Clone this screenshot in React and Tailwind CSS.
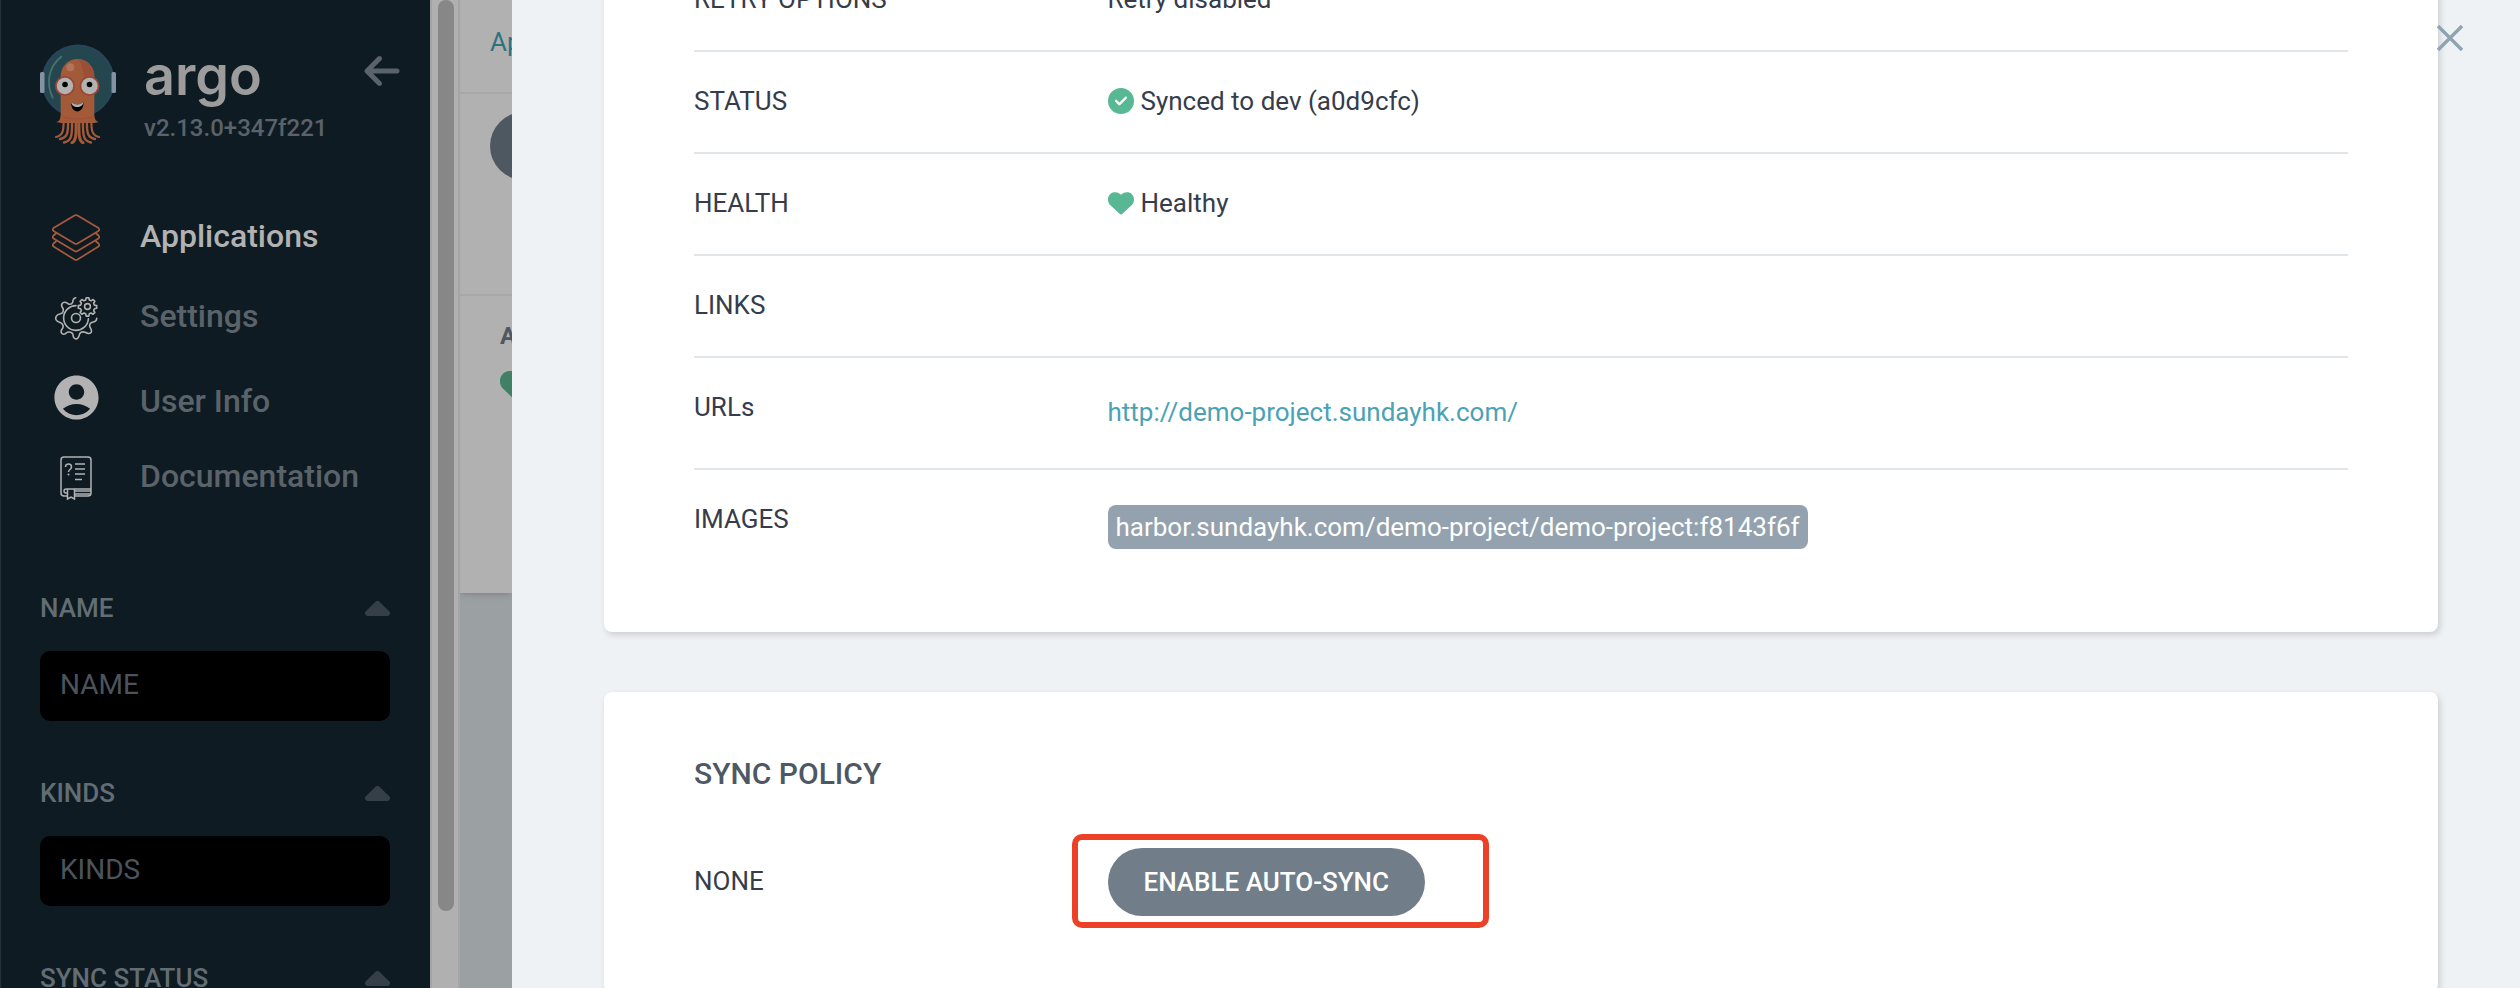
import React, { useState } from "react";
import { FaArrowLeft, FaCircleCheck, FaHeart } from "react-icons/fa6";
import { MdAccountCircle } from "react-icons/md";

const navItems = [
  { title: "Applications", Icon: LayersIcon, row: "h-20", active: true },
  { title: "Settings", Icon: GearsIcon, row: "h-20" },
  { title: "User Info", Icon: UserIcon, row: "h-[90px]" },
  { title: "Documentation", Icon: DocsIcon, row: "h-[60px]" },
];

const filters = ["NAME", "KINDS", "SYNC STATUS"];

export default function App() {
  return (
    <div className="flex h-screen overflow-hidden bg-[#eef2f5] font-['Roboto',sans-serif] text-[26px] leading-[48px] text-[#363c4a]">
      <Sidebar />
      <BackgroundPage />
      <DetailsPanel />
    </div>
  );
}

const Sidebar = () => {
  return (
    <aside className="flex shrink-0">
      <div className="w-[430px] overflow-hidden border-l border-[#24313a] bg-[#0f1b22] pr-10 pl-[39px]">
        <div className="flex h-[198px] pt-11">
          <ArgoLogo />
          <div className="ml-7 flex flex-col">
            <span className="font-['Inter',sans-serif] text-[54px] leading-[64px] font-semibold text-[#9b9c9b]">
              argo
            </span>
            <span className="text-[24px] leading-10 font-medium text-[#5b636a]">
              v2.13.0+347f221
            </span>
          </div>
          <button
            type="button"
            aria-label="Collapse sidebar"
            className="-mr-3 ml-auto h-10 pt-[7px] text-[#5b636a]"
          >
            <FaArrowLeft size={40} />
          </button>
        </div>

        <nav>
          {navItems.map((item) => (
            <NavItem key={item.title} item={item} />
          ))}
        </nav>

        {/* Resource filters */}
        <div className="mt-[76px] flex flex-col gap-12">
          {filters.map((name) => (
            <Filter key={name} name={name} />
          ))}
        </div>
      </div>

      {/* Scrollbar */}
      <div className="w-[30px] border-x-2 border-[#a5a5a5] bg-[#b0b0b0] pl-[6px]">
        <div className="h-[92.2%] w-4 rounded-full bg-[#878787]" />
      </div>
    </aside>
  );
};

const NavItem = ({ item }) => {
  const { title, Icon, row, active } = item;
  return (
    <a href="#" className={`flex items-center ${row}`}>
      <span className="ml-3 flex w-12 justify-center">
        <Icon />
      </span>
      <span
        className={`ml-10 pb-1 text-[32px] font-medium ${
          active ? "text-[#b2b2b2]" : "text-[#5b636a]"
        }`}
      >
        {title}
      </span>
    </a>
  );
};

const Filter = ({ name }) => {
  const [value, setValue] = useState("");
  const id = `filter-${name.toLowerCase().replace(" ", "-")}`;
  return (
    <div>
      <div className="flex items-center justify-between">
        <label htmlFor={id} className="font-medium text-[#626d74]">
          {name}
        </label>
        <button type="button" aria-label={`Collapse ${name}`}>
          <svg width="25" height="15" viewBox="0 0 25 15" fill="#353f47">
            <path d="M10.6.8a2.7 2.7 0 0 1 3.8 0l9.8 9.5c1.7 1.7.7 4.7-1.9 4.7H2.7C.1 15-.9 12 .8 10.3z" />
          </svg>
        </button>
      </div>
      <input
        id={id}
        type="text"
        placeholder={name}
        value={value}
        onChange={(e) => setValue(e.target.value)}
        className="mt-[19px] block h-[70px] w-full rounded-[10px] bg-black px-5 pb-1 text-[28px] text-[#b2b2b2] placeholder:text-[#4b545d]"
      />
    </div>
  );
};

// Application page left visible behind the details panel
const BackgroundPage = () => {
  return (
    <main className="w-[52px] shrink-0 overflow-hidden bg-[#9ba0a3]">
      <div className="h-[593px] bg-[#b1b1b1] shadow-md">
        <div className="h-[94px] border-b-2 border-[#a7a8a9] pt-[18px] pl-[30px] whitespace-nowrap text-[#2f727e]">
          <a href="#">Applications</a>
        </div>
        <div className="h-[202px] border-b-2 border-[#a7a8a9] pt-[18px] pl-[30px]">
          <button
            type="button"
            aria-label="Details"
            className="block h-[68px] w-[200px] rounded-full bg-[#4e5860]"
          />
        </div>
        <div className="pt-4 pl-10 whitespace-nowrap">
          <p className="text-[24px] font-bold text-[#4e5860]">APP HEALTH</p>
          <FaHeart size={36} className="mt-2 text-[#3f8066]" />
        </div>
      </div>
    </main>
  );
};

const DetailsPanel = () => {
  return (
    <section className="relative min-w-0 flex-1 pr-[82px] pl-[92px]">
      <div className="-mt-[90px] flex flex-col gap-[60px]">
        <div className="rounded-lg bg-white px-[90px] pt-10 pb-14 shadow-[2px_3px_6px_rgba(0,0,0,0.15)]">
          <Row label="RETRY OPTIONS">Retry disabled</Row>
          <Row label="STATUS">
            <FaCircleCheck size={26} className="mr-[7px] text-[#58b893]" />
            Synced to dev (a0d9cfc)
          </Row>
          <Row label="HEALTH">
            <FaHeart size={26} className="mr-[7px] text-[#58b893]" />
            Healthy
          </Row>
          <Row label="LINKS" />
          <Row label="URLs">
            <a href="#" className="py-[5px] text-[#4aa2b4]">
              http://demo-project.sundayhk.com/
            </a>
          </Row>
          <Row label="IMAGES" last>
            <span className="mt-[10px] rounded-lg bg-[#93a2ae] px-2 leading-[44px] text-white">
              harbor.sundayhk.com/demo-project/demo-project:f8143f6f
            </span>
          </Row>
        </div>

        <div className="rounded-lg bg-white px-[90px] pt-[58px] pb-16 shadow-[2px_3px_6px_rgba(0,0,0,0.15)]">
          <h2 className="text-[30px] font-medium text-[#4e5864]">
            SYNC POLICY
          </h2>
          <div className="mt-9 flex">
            <div className="w-1/4 pt-[23px]">NONE</div>
            {/* Callout frame around the action */}
            <div className="-ml-9 rounded-[10px] border-[6px] border-[#ec4126] pt-2 pr-[58px] pb-[6px] pl-[30px]">
              <button
                type="button"
                className="block h-[68px] rounded-full bg-[#717d88] px-9 font-medium text-white"
              >
                ENABLE AUTO-SYNC
              </button>
            </div>
          </div>
        </div>
      </div>

      <button
        type="button"
        aria-label="Close"
        className="absolute top-[25px] right-[57px]"
      >
        <svg
          width="26"
          height="26"
          viewBox="0 0 26 26"
          stroke="#8fa4b1"
          strokeWidth="3.4"
        >
          <path d="M1 1l24 24M25 1L1 25" />
        </svg>
      </button>
    </section>
  );
};

const Row = ({ label, children, last }) => {
  return (
    <div
      className={`flex pt-[25px] pb-[27px] ${
        last ? "" : "border-b-2 border-[#dfe5e9]"
      }`}
    >
      <div className="w-1/4">{label}</div>
      <div className="flex items-center">{children}</div>
    </div>
  );
};

function ArgoLogo() {
  return (
    <svg width="76" height="100" viewBox="0 0 76 100" aria-label="Argo">
      <circle cx="38" cy="37" r="36.5" fill="#28465a" />
      <circle cx="38" cy="37" r="34.5" fill="#24474f" />
      <rect y="28" width="4.5" height="21" rx="1.5" fill="#8393a3" />
      <rect x="71.5" y="28" width="4.5" height="21" rx="1.5" fill="#8393a3" />
      <path
        d="M21.3 12.7C8 23 6 40 12.7 53.7"
        fill="none"
        stroke="#4a706f"
        strokeWidth="1.8"
        strokeLinecap="round"
      />
      <path
        d="M20.7 32a16.8 17 0 0 1 33.6 0v38c0 5 2 8 5 8l-5 1H21l-5-1c3 0 4.7-3 4.7-8z"
        fill="#a35a39"
      />
      <path
        d="M38 15a16.8 17 0 0 1 16.3 17v12H43c2-12 0-23-5-29z"
        fill="#9c4f37"
      />
      <g fill="none" stroke="#a35a39" strokeLinecap="round">
        <path d="M23.500 76c.5 11-1 15.500-7.500 17" strokeWidth="2.200" />
        <path d="M28 76c.5 14-1 17.500-8 19" strokeWidth="2.400" />
        <path d="M32 76c.5 17-1 21-8 22.500" strokeWidth="2.400" />
        <path d="M36 76c.5 17-.5 21-4 22.800" strokeWidth="3" />
        <path d="M51.500 76c-.5 11 1 15.500 7.500 17" strokeWidth="2.200" />
        <path d="M47 76c-.5 14 1 17.500 8 19" strokeWidth="2.400" />
        <path d="M43 76c-.5 17 1 21 8 22.500" strokeWidth="2.400" />
        <path d="M39 76c-.5 17 .5 21 4 22.800" strokeWidth="3" />
      </g>
      <path d="M23 73q15 4 29 0" fill="none" stroke="#9c4f37" />
      <circle cx="30.3" cy="23.3" r="4" fill="#b0755c" />
      <circle cx="25" cy="42" r="10" fill="#9c4734" />
      <circle cx="49.5" cy="42" r="10" fill="#9c4734" />
      <circle cx="25" cy="42" r="8.2" fill="#b2b2b2" />
      <circle cx="49.5" cy="42" r="8.2" fill="#b2b2b2" />
      <circle cx="25" cy="40.5" r="2.8" />
      <circle cx="49.5" cy="40.5" r="2.8" />
      <path d="M31 58q6.3 5 12.6 0c0 6-3 9.5-6.3 9.5S31 64 31 58z" />
      <path
        d="M31 58q6.3 5 12.6 0c-.5 3-3 5-6.3 5s-5.8-2-6.3-5z"
        fill="#b2b2b2"
      />
    </svg>
  );
}

function LayersIcon() {
  return (
    <svg
      width="48"
      height="48"
      viewBox="0 0 48 48"
      fill="none"
      stroke="#a85a3c"
      strokeWidth="1.7"
      strokeLinejoin="round"
    >
      <path d="M22.5 1.5q1.5-.8 3 0l21 12.5q1.5 1.5 0 3l-21 12.5q-1.5.8-3 0L1.5 17q-1.5-1.5 0-3z" />
      <path d="M4.5 19l-3 2.5q-1.5 1.5 0 3l21 12.5q1.5.8 3 0l21-12.5q1.5-1.5 0-3l-3-2.5" />
      <path d="M4.5 27l-3 2.5q-1.5 1.5 0 3l21 13q1.5.8 3 0l21-13q1.5-1.5 0-3l-3-2.5" />
    </svg>
  );
}

function GearsIcon() {
  return (
    <svg
      width="44"
      height="44"
      viewBox="0 0 44 44"
      fill="none"
      stroke="#b2b2b2"
      strokeWidth="1.6"
      strokeLinecap="round"
      strokeLinejoin="round"
    >
      <g transform="translate(1.2 1.2)">
        <circle cx="20.8" cy="20.8" r="4.5" />
        <path d="M20.8 8.4A12.4 12.4 0 1 0 33.2 21.5" />
        <path d="M20.5 0.5 Q17.8 1 17.5 5 Q16.5 7.5 13.5 7 Q9 3.5 6.8 6.5 Q5.5 8.5 8 11.5 Q8.5 16 5.5 16.5 Q0.5 17.5 0.5 21 Q0.5 24 5.5 25.5 Q9 28 7.5 31 Q4.5 34.5 7 36.5 Q9 38 12 35 Q16.5 34 17.7 37 Q18 41.5 21 41.7 Q23.5 41.5 24.5 36.5 Q26 34 30 35 Q34 37.5 36 35 Q37 33.5 34.5 29.5 Q34 26 37 25 Q41.5 24.5 41.5 21" />
        <circle cx="32.3" cy="9.3" r="2.9" />
        <path d="M31 .5h2.6l.5 2.3 1.8.8 2-1.3 1.8 1.8-1.3 2 .8 1.8 2.3.5V11l-2.3.5-.8 1.8 1.3 2-1.8 1.8-2-1.3-1.800.8-.5 2.300H31l-.5-2.300-1.800-.8-2 1.300-1.800-1.800 1.300-2-.8-1.800-2.300-.5V8.400l2.300-.5.8-1.800-1.300-2 1.800-1.800 2 1.300 1.800-.8z" />
      </g>
    </svg>
  );
}

function UserIcon() {
  return <MdAccountCircle size={53} className="mb-3 shrink-0 text-[#b2b2b2]" />;
}

function DocsIcon() {
  return (
    <svg
      width="32"
      height="44"
      viewBox="0 0 32 44"
      fill="none"
      stroke="#b2b2b2"
      strokeWidth="1.5"
    >
      <path d="M7 40H4q-3 0-3-3V4q0-3 3-3h24q3 0 3 3v33q0 3-3 3H15" />
      <path d="M31 33H6q-2 0-2 2t2 2h1M15 35h16M15 38h15" />
      <path d="M7.5 33v10l3.5-2 3.5 2V33" />
      <path d="M15 8h10M15 13h10M15 18h10M15 23.5h7" />
      <path d="M5.5 11q0-3 3-3t3 3q0 1.5-1.5 2.5T8.5 16" />
      <circle cx="8.5" cy="18.5" r="1" fill="#b2b2b2" stroke="none" />
    </svg>
  );
}
